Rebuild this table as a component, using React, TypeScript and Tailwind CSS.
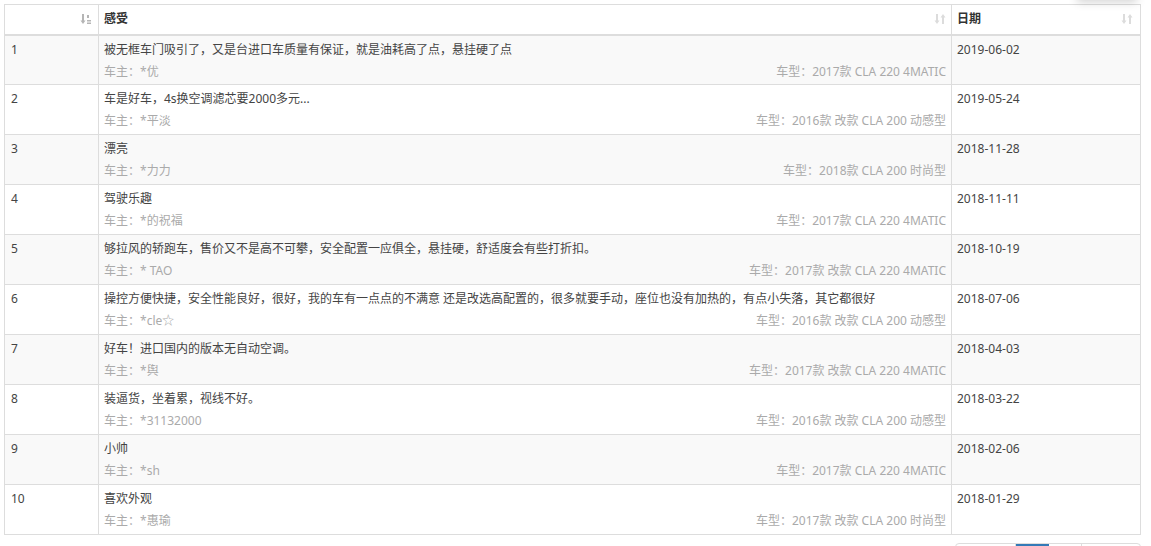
import React from 'react'

const rows = [
  { id: 1, text: '被无框车门吸引了，又是台进口车质量有保证，就是油耗高了点，悬挂硬了点', owner: '*优', model: '2017款 CLA 220 4MATIC', date: '2019-06-02' },
  { id: 2, text: '车是好车，4s换空调滤芯要2000多元...', owner: '*平淡', model: '2016款 改款 CLA 200 动感型', date: '2019-05-24' },
  { id: 3, text: '漂亮', owner: '*力力', model: '2018款 CLA 200 时尚型', date: '2018-11-28' },
  { id: 4, text: '驾驶乐趣', owner: '*的祝福', model: '2017款 CLA 220 4MATIC', date: '2018-11-11' },
  { id: 5, text: '够拉风的轿跑车，售价又不是高不可攀，安全配置一应俱全，悬挂硬，舒适度会有些打折扣。', owner: '* TAO', model: '2017款 改款 CLA 220 4MATIC', date: '2018-10-19' },
  { id: 6, text: '操控方便快捷，安全性能良好，很好，我的车有一点点的不满意 还是改选高配置的，很多就要手动，座位也没有加热的，有点小失落，其它都很好', owner: '*cle☆', model: '2016款 改款 CLA 200 动感型', date: '2018-07-06' },
  { id: 7, text: '好车！进口国内的版本无自动空调。', owner: '*舆', model: '2017款 改款 CLA 220 4MATIC', date: '2018-04-03' },
  { id: 8, text: '装逼货，坐着累，视线不好。', owner: '*31132000', model: '2016款 改款 CLA 200 动感型', date: '2018-03-22' },
  { id: 9, text: '小帅', owner: '*sh', model: '2017款 CLA 220 4MATIC', date: '2018-02-06' },
  { id: 10, text: '喜欢外观', owner: '*惠瑜', model: '2017款 改款 CLA 200 时尚型', date: '2018-01-29' },
]

function SortIcon({ active }: { active?: boolean }) {
  const c = active ? '#b5b5b5' : '#dcdcdc'
  return (
    <svg width="12" height="12" viewBox="0 0 12 12" className="shrink-0">
      <path d="M3 1v8" stroke={c} strokeWidth="2" />
      <path d="M0.5 7.5L3 11l2.5-3.5z" fill={c} />
      {active ? (
        <>
          <rect x="7" y="2" width="2" height="3" fill={c} />
          <rect x="7" y="7" width="4" height="1.5" fill={c} />
          <rect x="7" y="9.5" width="4" height="1.5" fill={c} />
        </>
      ) : (
        <>
          <path d="M9 3v8" stroke={c} strokeWidth="2" />
          <path d="M6.5 4.5L9 1l2.5 3.5z" fill={c} />
        </>
      )}
    </svg>
  )
}

export default function App() {
  return (
    <div
      className="relative w-[1151px] h-[546px] overflow-hidden bg-white text-[12px] text-[#444]"
      style={{ fontFamily: '"Noto Sans", "Noto Sans CJK SC", sans-serif' }}
    >
      {/* shadow from something above the viewport */}
      <div className="absolute right-[14px] top-[-24px] w-[60px] h-[24px] bg-white shadow-[0_2px_10px_rgba(0,0,0,0.18)]" />

      <div className="ml-[4px] mt-[4px] w-[1137px]">
        <table className="w-full table-fixed border-collapse border border-[#ddd]">
          <colgroup>
            <col className="w-[94px]" />
            <col className="w-[853px]" />
            <col />
          </colgroup>
          <thead>
            <tr className="h-[30px] border-b-2 border-[#ddd]">
              <th className="border-r border-[#ddd] px-[6px] font-bold">
                <div className="flex justify-end">
                  <SortIcon active />
                </div>
              </th>
              <th className="border-r border-[#ddd] px-[5px] text-left font-bold text-[#333]">
                <div className="flex items-center justify-between">
                  <span>感受</span>
                  <SortIcon />
                </div>
              </th>
              <th className="px-[5px] text-left font-bold text-[#333]">
                <div className="flex items-center justify-between pr-[2px]">
                  <span>日期</span>
                  <SortIcon />
                </div>
              </th>
            </tr>
          </thead>
          <tbody>
            {rows.map((r, i) => (
              <tr key={r.id} className={`h-[50px] border-t border-[#ddd] align-top ${i % 2 === 0 ? 'bg-[#f9f9f9]' : 'bg-white'}`}>
                <td className="border-r border-[#ddd] px-[6px] pt-[5px]">
                  <div className="leading-[18px]">{r.id}</div>
                </td>
                <td className="border-r border-[#ddd] px-[5px] pt-[5px]">
                  <div className="leading-[18px] whitespace-nowrap">{r.text}</div>
                  <div className="mt-[4px] flex justify-between leading-[18px] text-[#aaa]">
                    <span>车主：{r.owner}</span>
                    <span>车型：{r.model}</span>
                  </div>
                </td>
                <td className="px-[5px] pt-[5px]">
                  <div className="leading-[18px]">{r.date}</div>
                </td>
              </tr>
            ))}
          </tbody>
        </table>

        {/* pagination, only its top edge is in view */}
        <div className="mt-[8px] flex justify-end">
          <div className="flex h-[30px] rounded-[4px] border border-[#ddd]">
            <div className="w-[60px] border-r border-[#ddd]" />
            <div className="w-[33px] bg-[#337ab7]" />
            <div className="w-[33px] border-r border-[#ddd]" />
            <div className="w-[58px]" />
          </div>
        </div>
      </div>
    </div>
  )
}
